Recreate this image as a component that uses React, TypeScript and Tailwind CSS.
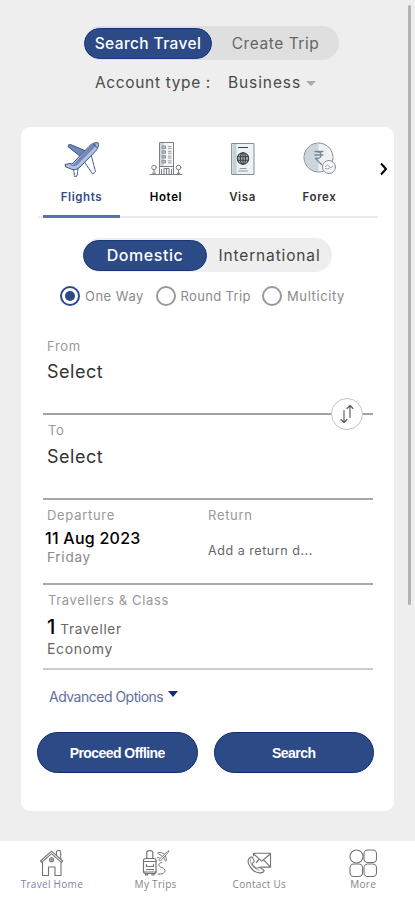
import type { ReactNode } from 'react'

const stroke = {
  fill: 'none',
  stroke: 'currentColor',
  strokeLinecap: 'round',
  strokeLinejoin: 'round',
} as const

/* Service tab icons */
const PlaneIcon = () => (
  <svg width="36" height="36" viewBox="0 0 36 36" {...stroke} strokeWidth="1" className="text-[#3a558e]">
    <path d="M23 10.500L6.500 3.500Q3.800 3 4.200 5.800L16.500 15.500z" fill="#7088b6" />
    <path d="M27 13.500l4.500 17-2.800 2.500L20 20.500z" fill="#fff" strokeDasharray="3 1" />
    <path d="M14 27l-1 8-2.500.5-1-8z" fill="#fff" strokeDasharray="3 1" />
    <path d="M1.500 25.500L1 23.500l5-1 2 .5L25 5.400C28 2.200 32.500.8 34.200 1.900c1 2.300-.4 6-2.900 8.500L16 26c-2.600 2.600-6.500 3.500-9.300 1.900z" fill="#b3c2dc" />
    <path d="M5.500 23l3.500 1L25.300 5.900c2-2.400 5-3.800 7.700-3.900L31 6 13.500 23.500c-2.500 2.300-6 2.200-8-.5z" fill="#6f88b7" stroke="none" />
    <path d="M29.500 3.500l3.500 3" />
  </svg>
)

const HotelIcon = () => (
  <svg width="34" height="36" viewBox="0 0 34 36" {...stroke} strokeWidth="1" className="text-[#7b8085]">
    <path d="M1 33.500h32" />
    <path d="M10.500 33V1.500h14V33" fill="#f4f6f7" />
    <path d="M11 2h4v23h-4z" fill="#cfd8dd" stroke="none" />
    <path d="M10.500 25.500h14M15 33v-5.500h5V33M17.500 27.500V33M12.500 28.500v4M22.500 28.500v4" />
    <g strokeWidth=".8">
      <path d="M13.500 5h3v2.500h-3zM13.500 9.800h3v2.500h-3zM13.500 14.600h3v2.500h-3zM13.500 19.400h3v2.500h-3z" fill="#b8c6ce" />
      <path d="M19.500 5.500h2.500M19.500 7.500h2.500M19.500 10.300h2.500M19.500 12.300h2.500M19.500 15.100h2.500M19.500 17.100h2.500M19.500 19.900h2.500M19.500 21.900h2.500" />
    </g>
    <circle cx="5" cy="26.500" r="2.300" />
    <path d="M5 28.800v4.500M3.500 32l1.500 1 1.500-1" />
    <circle cx="29.500" cy="26.500" r="2.300" />
    <path d="M29.500 28.800v4.500M28 32l1.500 1 1.500-1" />
  </svg>
)

const VisaIcon = () => (
  <svg width="24" height="34" viewBox="0 0 24 34" {...stroke} strokeWidth="1" className="text-[#858c91]">
    <path d="M1 1.500h22v31H1z" fill="#edf2f4" />
    <path d="M1.500 2h4v30h-4z" fill="#c3d0d7" stroke="none" />
    <path d="M7.500 5.500h9" stroke="#3c4145" strokeWidth="1.200" />
    <g stroke="#3a4046" strokeWidth="1.100">
      <circle cx="12" cy="16.500" r="5.700" fill="#a8b7c0" />
      <ellipse cx="12" cy="16.500" rx="2.600" ry="5.700" />
      <path d="M6.500 14.700h11M6.500 18.300h11M12 10.800v11.400" />
    </g>
    <path d="M9 26.500h6M7.500 29h9" stroke="#90989d" strokeWidth="1.200" />
  </svg>
)

const ForexIcon = () => (
  <svg width="34" height="34" viewBox="0 0 34 34" {...stroke} strokeWidth="1" className="text-[#858b90]">
    <circle cx="15.500" cy="15.500" r="14.500" fill="#eef2f4" stroke="none" />
    <path d="M15.500 1.500a14 14 0 000 28z" fill="#cbd7dd" stroke="none" />
    <circle cx="15.500" cy="15.500" r="14.500" strokeDasharray="5 1" />
    <path d="M12 9.500h8M12 13h8M13.500 9.500c6 0 6 7 0 7h-1l6 6" stroke="#7d868c" strokeWidth="1.300" />
    <circle cx="26" cy="25" r="6.500" fill="#f8f9f9" />
    <path d="M22.500 24.500l2-1.500 3 2.500 2.500-1M22.500 26.500l2 .5 2-1" strokeWidth=".8" />
  </svg>
)

/* Bottom navigation icons */
const HomeIcon = () => (
  <svg width="26" height="28" viewBox="0 0 26 28" {...stroke} strokeWidth="1.100">
    <path d="M1.500 12L12.500 2.200 23.700 12l-1.300 1.300L12.500 4.700 2.800 13.300zM3.500 13v13.500h6V18h6.500v8.500h6V13" />
    <path d="M17.500 6V3.300c0-2.600 4.200-2.600 4.200 0v6.500" />
    <circle cx="12.500" cy="10.700" r="2" />
    <path d="M12.500 9v3.500M10.800 10.700h3.500" strokeWidth=".7" />
  </svg>
)

const TripsIcon = () => (
  <svg width="28" height="28" viewBox="0 0 28 28" {...stroke} strokeWidth="1.200">
    <rect x="1.500" y="9.500" width="12.500" height="15" rx="2" />
    <path d="M4.800 9.500V3.500c0-2.600 6-2.600 6 0v6M1.500 12.500H14M4.500 15.500v2h7v-2M4.500 20.500h7M1.500 23H14M3.500 24.500v1.500h2v-1.500M10 24.500v1.500h2v-1.500" />
    <path d="M17 10.500l8.500-8 1.500-.8-.8 1.700-7.400 8.200zM22 4.500l-5.500-1.300-.8 1 4 2.700M23.500 6.500l1 5-1 .7-2-4M17 8.500l-1.700.2" strokeWidth=".9" />
    <path d="M19.500 13.500c-4 1-3.500 4 .3 5 5 1.400 3.700 6.500-1.300 6.500H16" strokeWidth="1" />
  </svg>
)

const ContactIcon = () => (
  <svg width="26" height="24" viewBox="0 0 28 26" {...stroke} strokeWidth="1.200">
    <path d="M8 5V2.500h18.500v15H16M8 3l9 8 9.500-8M26 17l-7-7.500M14 9l-3 3.500" />
    <path d="M6.500 6.300C3 6.800 1.500 10 2.600 13.500 4 18.500 8.800 23.300 14.500 23.700c3.600.2 6-1.700 4.500-3.200l-4-2.600c-1.500-.8-2.700 1.200-3.700.8-2-.7-4.600-3.700-4.600-5 .1-1 2.400-1.500 2-3z" />
    <path d="M5 8.500c-1.500 4 2.500 11 9.500 12.500" strokeWidth=".7" />
  </svg>
)

const MoreIcon = () => (
  <svg width="29" height="29" viewBox="0 0 29 29" {...stroke} strokeWidth="1.100">
    <circle cx="7.500" cy="7.500" r="6.500" />
    <rect x="15" y="1" width="12.500" height="12.500" rx="3.700" />
    <rect x="1" y="15" width="12.500" height="12.500" rx="3.700" />
    <rect x="15" y="15" width="12.500" height="12.500" rx="3.700" />
  </svg>
)

function Tab({ icon, label, className }: { icon: ReactNode; label: string; className: string }) {
  return (
    <button className={`flex h-[91px] flex-col items-center pt-[14px] text-[11.5px] font-semibold tracking-[0.6px] ${className}`}>
      <span className="flex h-9 items-center">{icon}</span>
      <span className="mt-[12px] leading-4">{label}</span>
    </button>
  )
}

function Radio({ label, checked = false, className }: { label: string; checked?: boolean; className: string }) {
  return (
    <label className={`flex items-center text-[13px] text-[#8a8a8a] ${className}`}>
      <span className={`mr-[5px] flex size-5 shrink-0 items-center justify-center rounded-full border-2 ${checked ? 'border-[#2b4a86]' : 'border-[#999]'}`}>
        {checked && <span className="size-[10px] rounded-full bg-[#2b4a86]" />}
      </span>
      <span className="pt-px">{label}</span>
    </label>
  )
}

function NavItem({ icon, label, className = 'text-[#858585]' }: { icon: ReactNode; label: string; className?: string }) {
  return (
    <button className="flex flex-1 flex-col items-center text-[#747474]">
      <span className="mt-[7px] flex h-[30px] items-center">{icon}</span>
      <span className={`whitespace-nowrap font-['Open_Sans',sans-serif] text-[10px] leading-[13px] tracking-[0.3px] ${className}`}>{label}</span>
    </button>
  )
}

export default function App() {
  return (
    <div className="relative flex h-[900px] w-[415px] flex-col overflow-hidden bg-[#eeeeee] font-['Inter',sans-serif] text-[#333]">
      {/* Mode switch */}
      <header className="flex h-[127px] shrink-0 flex-col pl-[84px] pt-[26px]">
        <div className="flex h-[34px] w-[255px] items-center rounded-full bg-[#dfdfdf]">
          <button className="h-[31px] w-[128px] rounded-full border border-[#17377b] bg-[#2b4a86] pt-[2px] text-[15.500px] font-medium tracking-[0.4px] text-white">Search Travel</button>
          <button className="flex-1 pt-[2px] text-[15.500px] tracking-[0.550px] text-[#666]">Create Trip</button>
        </div>
        <div className="mt-[13px] flex h-5 items-center pl-[11px] text-[15.500px] tracking-[0.9px] text-[#4a4a4a]">
          <span className="w-[133px] tracking-[0.650px]">Account type :</span>
          <span>Business</span>
          <span className="ml-[5px] border-x-[5px] border-t-[5px] border-x-transparent border-t-[#aaa]" />
        </div>
      </header>

      {/* Booking card */}
      <main className="ml-[21px] h-[684px] w-[373px] shrink-0 rounded-[9px] bg-white">
        <nav className="flex h-[91px] pl-[17px] text-black">
          <div className="flex w-[340px] border-b-2 border-[#eaeaea] pl-[5px]">
            <Tab icon={<PlaneIcon />} label="Flights" className="w-[77px] border-b-[3px] border-[#5c72a6] text-[#344c8c]" />
            <Tab icon={<HotelIcon />} label="Hotel" className="w-[92px]" />
            <Tab icon={<VisaIcon />} label="Visa" className="w-[61px] text-[#333]" />
            <Tab icon={<ForexIcon />} label="Forex" className="w-[93px] text-[#333]" />
          </div>
          <svg width="9" height="14" viewBox="0 0 9 14" {...stroke} strokeWidth="2" strokeLinecap="butt" className="ml-px mt-[35px]">
            <path d="M2 1.500l5 5.500-5 5.500" />
          </svg>
        </nav>

        <div className="ml-[62px] mt-[20px] flex h-[34px] w-[249px] items-center rounded-full bg-[#eeeeee]">
          <button className="h-[31px] w-[124px] rounded-full border border-[#17377b] bg-[#2b4a86] text-[16px] font-medium tracking-[0.550px] text-white">Domestic</button>
          <button className="flex-1 pt-px text-[15.500px] tracking-[0.850px] text-[#444]">International</button>
        </div>

        <div className="ml-[39px] mt-[14px] flex h-5">
          <Radio label="One Way" checked className="w-[95.5px] tracking-[0.5px]" />
          <Radio label="Round Trip" className="w-[106.500px] tracking-[0.350px]" />
          <Radio label="Multicity" className="tracking-[0.6px]" />
        </div>

        {/* Trip fields */}
        <section className="ml-[22px] w-[330px]">
          <div className="relative h-[109px] border-b-2 border-[#a2a2a2] pl-[4px] pt-[32px]">
            <p className="text-[13px] leading-4 tracking-[0.7px] text-[#999]">From</p>
            <p className="mt-[6px] text-[18px] leading-[24px] tracking-[0.5px]">Select</p>
            <button className="absolute -bottom-[17px] right-[10px] flex size-8 items-center justify-center rounded-full border border-[#c4c4c4] bg-white text-[#555]">
              <svg width="16" height="20" viewBox="0 0 16 20" {...stroke} strokeWidth="1.100">
                <path d="M11 13.500V1.500M8 4.500L11 1.500 14 4.500M5 6.500v12M2 15.500L5 18.500 8 15.500" />
              </svg>
            </button>
          </div>
          <div className="h-[85px] border-b-2 border-[#a8a8a8] pl-[4px] pt-[7px]">
            <p className="pl-px text-[13px] leading-4 tracking-[0.7px] text-[#999]">To</p>
            <p className="mt-[7px] text-[18px] leading-[24px] tracking-[0.5px]">Select</p>
          </div>
          <div className="flex h-[85px] border-b-2 border-[#a8a8a8] pt-[7px]">
            <div className="w-[165px]">
              <p className="pl-[4px] text-[13px] leading-4 tracking-[0.7px] text-[#999]">Departure</p>
              <p className="mt-[4px] pl-[2px] text-[16px] font-medium leading-[22px] tracking-[0.250px] text-black">11 Aug 2023</p>
              <p className="pl-[4px] text-[13.500px] leading-4 tracking-[0.750px] text-[#888]">Friday</p>
            </div>
            <div>
              <p className="text-[13px] leading-4 tracking-[0.7px] text-[#999]">Return</p>
              <p className="mt-[20px] text-[12.500px] leading-4 tracking-[0.550px] text-[#666]">Add a return d...</p>
            </div>
          </div>
          <div className="h-[85px] border-b-2 border-[#ccc] pl-[4px] pt-[7px]">
            <p className="pl-px text-[13px] leading-4 tracking-[0.650px] text-[#999]">Travellers &amp; Class</p>
            <p className="mt-[7px] flex items-baseline leading-[24px]">
              <span className="mr-[5px] text-[20px] font-medium text-black">1</span>
              <span className="text-[13.500px] tracking-[0.7px] text-[#666]">Traveller</span>
            </p>
            <p className="text-[14px] leading-4 tracking-[0.650px] text-[#666]">Economy</p>
          </div>
        </section>

        <button className="ml-[28px] mt-[16px] flex h-5 items-center text-[14px] tracking-[-0.5px] text-[#5f6ea0]">
          Advanced Options
          <span className="mb-[5px] ml-[5px] border-x-[5px] border-t-[6px] border-x-transparent border-t-[#172b78]" />
        </button>

        <div className="ml-[16px] mt-[26px] flex gap-4 font-['Liberation_Sans',sans-serif] text-[14px] font-bold tracking-[-0.550px] text-white">
          <button className="h-[41px] w-[160.500px] rounded-full border border-[#0e2c70] bg-[#2b4a86] pt-px">Proceed Offline</button>
          <button className="h-[41px] w-[160.500px] rounded-full border border-[#0e2c70] bg-[#2b4a86] pt-px">Search</button>
        </div>
      </main>

      <footer className="mt-[30px] flex h-[59px] shrink-0 bg-white">
        <NavItem icon={<HomeIcon />} label="Travel Home" className="text-[#7c82a6]" />
        <NavItem icon={<TripsIcon />} label="My Trips" />
        <NavItem icon={<ContactIcon />} label="Contact Us" />
        <NavItem icon={<MoreIcon />} label="More" />
      </footer>

      {/* Scroll thumb */}
      <div className="absolute left-[408px] top-[5px] h-[600px] w-[3px] rounded-full bg-[#b2b2b2]" />
    </div>
  )
}
